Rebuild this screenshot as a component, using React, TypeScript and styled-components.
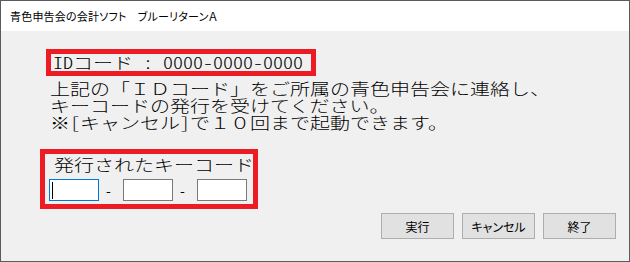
import React from 'react';
import styled, { createGlobalStyle } from 'styled-components';

const GlobalStyle = createGlobalStyle`
	html, body {
		margin: 0;
		padding: 0;
		background: #ffffff;
	}
	body {
		font-family: "Noto Sans CJK JP", "Noto Sans", sans-serif;
		color: #000000;
	}
`;

const Window = styled.div`
	width: 630px;
	height: 262px;
	box-sizing: border-box;
	border: 1px solid #5a5a5a;
	background-color: #f0f0f0;
	display: flex;
	flex-direction: column;
`;

const TitleBar = styled.div`
	height: 30px;
	flex: none;
	background-color: #ffffff;
	display: flex;
	align-items: center;
	padding-left: 9px;
	font-size: 11px;
	font-feature-settings: 'palt';
	letter-spacing: 0.2px;
`;

const Body = styled.div`
	flex: 1;
	display: flex;
	flex-direction: column;
	align-items: flex-start;
	padding: 18px 13px 0 39px;
	font-size: 16px;
	font-weight: 300;
	line-height: 17px;
`;

// the old dialog font is drawn wide, so stretch the text sideways
const Wide = styled.span`
	display: inline-block;
	white-space: nowrap;
	transform: scaleX(1.25);
	transform-origin: left center;
`;

// half-width latin, as the fixed-pitch dialog font has it
const Half = styled.span`
	font-feature-settings: 'hwid';
`;

const Marked = styled.div<{ width: number; height: number }>`
	box-sizing: border-box;
	width: ${(props) => props.width}px;
	height: ${(props) => props.height}px;
	border: 5px solid #ed1c24;
`;

const IdBox = styled(Marked)`
	margin-left: 6px;
	padding-left: 2px;
`;

const Message = styled.div`
	margin: 4px 0 0 10px;
	display: flex;
	flex-direction: column;
`;

const KeyBox = styled(Marked)`
	margin-top: 18px;
	padding: 2px 0 0 4px;
	display: flex;
	flex-direction: column;
`;

const KeyLabel = styled.div`
	margin-left: 5px;
`;

const Fields = styled.div`
	margin-top: 6px;
	display: flex;
	align-items: center;
`;

const Field = styled.div<{ focused?: boolean }>`
	position: relative;
	width: 50px;
	height: 22px;
	box-sizing: border-box;
	background-color: #ffffff;
	border: 1px solid ${(props) => (props.focused ? '#0078d7' : '#7a7a7a')};
	&::before {
		content: '';
		display: ${(props) => (props.focused ? 'block' : 'none')};
		position: absolute;
		left: 2px;
		top: 2px;
		width: 1px;
		height: 17px;
		background-color: #000000;
	}
`;

const Dash = styled.span`
	width: 24px;
	box-sizing: border-box;
	padding-left: 7px;
	font-size: 14px;
	font-weight: 400;
	line-height: 22px;
`;

const Buttons = styled.div`
	align-self: stretch;
	margin-top: 4px;
	display: flex;
	justify-content: flex-end;
	gap: 8px;
`;

const Button = styled.button`
	width: 73px;
	height: 26px;
	padding: 0;
	box-sizing: border-box;
	background-color: #e1e1e1;
	border: 1px solid #adadad;
	border-radius: 0;
	font-family: "Noto Sans CJK JP", sans-serif;
	font-size: 12px;
	font-feature-settings: 'palt';
	color: #000000;
`;

const App = () => {
	return (
		<>
			<GlobalStyle />
			<Window>
				<TitleBar>青色申告会の会計ソフト　ブルーリターンＡ</TitleBar>
				<Body>
					<IdBox width={270} height={27}>
						<Wide>
							<Half>IDコード : 0000-0000-0000</Half>
						</Wide>
					</IdBox>
					<Message>
						<Wide>上記の「ＩＤコード」をご所属の青色申告会に連絡し、</Wide>
						<Wide>キーコードの発行を受けてください。</Wide>
						<Wide>
							※<Half>[</Half>キャンセル<Half>]</Half>で１０回まで起動できます。
						</Wide>
					</Message>
					<KeyBox width={218} height={60}>
						<KeyLabel>
							<Wide>発行されたキーコード</Wide>
						</KeyLabel>
						<Fields>
							<Field focused />
							<Dash>-</Dash>
							<Field />
							<Dash>-</Dash>
							<Field />
						</Fields>
					</KeyBox>
					<Buttons>
						<Button>実行</Button>
						<Button>キャンセル</Button>
						<Button>終了</Button>
					</Buttons>
				</Body>
			</Window>
		</>
	);
};

export default App;
